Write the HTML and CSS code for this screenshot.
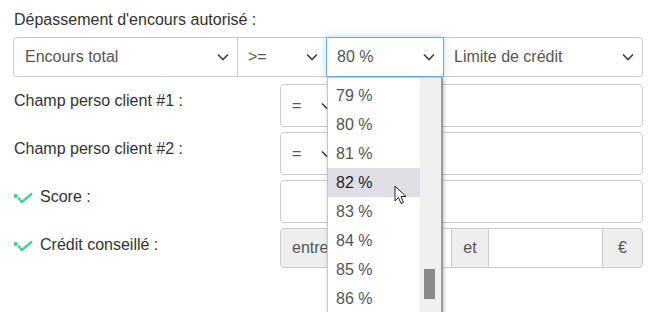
FILE: index.html
```html
<html>
    <head>
        <title>Dépassement d'encours</title>
        <link rel="stylesheet" href="styles.css">
    </head>
    <body>
        <div class="page">
            <div class="title">Dépassement d'encours autorisé :</div>

            <div class="select-group">
                <div class="select sel-field">Encours total
                    <svg class="chevron" viewBox="0 0 12 8"><polyline points="1,1.5 6,6.5 11,1.5"/></svg>
                </div>
                <div class="select sel-cmp">&gt;=
                    <svg class="chevron" viewBox="0 0 12 8"><polyline points="1,1.5 6,6.5 11,1.5"/></svg>
                </div>
                <div class="select sel-pct focused">80 %
                    <svg class="chevron" viewBox="0 0 12 8"><polyline points="1,1.5 6,6.5 11,1.5"/></svg>

                    <div class="dropdown">
                        <div class="dropdown-list">
                            <div class="option">79 %</div>
                            <div class="option">80 %</div>
                            <div class="option">81 %</div>
                            <div class="option hover">82 %</div>
                            <div class="option">83 %</div>
                            <div class="option">84 %</div>
                            <div class="option">85 %</div>
                            <div class="option">86 %</div>
                        </div>
                        <div class="scroll-track"><div class="scroll-thumb"></div></div>
                        <svg class="cursor" viewBox="0 0 13 21"><path d="M1 1 L1 16 L4.5 12.5 L7 18.5 L9.5 17.5 L7 11.5 L12 11.5 Z"/></svg>
                    </div>
                </div>
                <div class="select sel-ref">Limite de crédit
                    <svg class="chevron" viewBox="0 0 12 8"><polyline points="1,1.5 6,6.5 11,1.5"/></svg>
                </div>
            </div>

            <div class="row">
                <div class="label">Champ perso client #1 :</div>
                <div class="control group">
                    <div class="select sel-op">=
                        <svg class="chevron" viewBox="0 0 12 8"><polyline points="1,1.5 6,6.5 11,1.5"/></svg>
                    </div>
                    <input class="input grow" type="text">
                </div>
            </div>

            <div class="row">
                <div class="label">Champ perso client #2 :</div>
                <div class="control group">
                    <div class="select sel-op">=
                        <svg class="chevron" viewBox="0 0 12 8"><polyline points="1,1.5 6,6.5 11,1.5"/></svg>
                    </div>
                    <input class="input grow" type="text">
                </div>
            </div>

            <div class="row">
                <div class="label">
                    <svg class="check" viewBox="0 0 20 12"><circle cx="1.5" cy="4" r="1"/><polyline points="4,5.5 8,10 18,1.5"/></svg>
                    Score :
                </div>
                <div class="control group">
                    <input class="input grow" type="text">
                </div>
            </div>

            <div class="row row-last">
                <div class="label">
                    <svg class="check" viewBox="0 0 20 12"><circle cx="1.5" cy="4" r="1"/><polyline points="4,5.5 8,10 18,1.5"/></svg>
                    Crédit conseillé :
                </div>
                <div class="control group">
                    <div class="addon">entre</div>
                    <input class="input grow" type="text">
                    <div class="addon addon-et">et</div>
                    <input class="input amount" type="text">
                    <div class="addon addon-euro">€</div>
                </div>
            </div>
        </div>
    </body>
</html>
```

FILE: styles.css
```css
body{
    margin: 0;
    background-color: #fff;
    font-family: "Liberation Sans", Arial, sans-serif;
    font-size: 16px;
    color: #333;
}
.page{
    padding: 10px 7px 0 13px;
}
.title{
    padding-left: 1px;
    line-height: 20px;
    margin-bottom: 7px;
}

/* selects */
.select-group{
    display: flex;
    height: 40px;
}
.select{
    position: relative;
    display: flex;
    align-items: center;
    justify-content: space-between;
    box-sizing: border-box;
    height: 100%;
    padding: 0 8px 0 11px;
    border: 1px solid #ccc;
    background-color: #fff;
    color: #555;
    flex-shrink: 0;
}
.select + .select{
    margin-left: -1px;
}
.chevron{
    width: 12px;
    height: 8px;
    fill: none;
    stroke: #444;
    stroke-width: 1.7;
}
.sel-field{
    width: 225px;
    border-radius: 4px 0 0 4px;
}
.sel-cmp{
    width: 90px;
    padding-left: 10px;
}
.sel-pct{
    width: 118px;
    padding-left: 10px;
}
.sel-pct.focused{
    border-color: #66afe9;
    box-shadow: 0 0 6px rgba(102, 175, 233, 0.5);
    z-index: 2;
}
.sel-ref{
    flex: 1;
    flex-shrink: 1;
    padding-left: 10px;
    border-radius: 0 4px 4px 0;
}

/* dropdown list */
.dropdown{
    position: absolute;
    top: calc(100% + 1px);
    left: 0;
    width: 116px;
    height: 240px;
    box-sizing: border-box;
    display: flex;
    background-color: #fff;
    border: 1px solid #c8c8c8;
    border-right: 2px solid #9a9a9a;
    box-shadow: 1px 2px 4px rgba(0, 0, 0, 0.25);
    overflow: hidden;
    z-index: 5;
}
.dropdown-list{
    flex: 1;
    padding-top: 3px;
}
.option{
    height: 29px;
    line-height: 29px;
    padding-left: 8px;
    color: #555;
}
.option.hover{
    background-color: #dedee4;
    color: #222;
}
.scroll-track{
    position: relative;
    width: 21px;
    background-color: #f0f0f0;
}
.scroll-thumb{
    position: absolute;
    left: 4px;
    top: 191px;
    width: 11px;
    height: 30px;
    background-color: #8a8a8a;
}
.cursor{
    position: absolute;
    left: 66px;
    top: 107px;
    width: 13px;
    height: 21px;
    fill: #fff;
    stroke: #222;
    stroke-width: 1;
}

/* rows */
.row{
    display: flex;
    margin-top: 7px;
    height: 43px;
}
.row + .row{
    margin-top: 5px;
}
.row-last{
    height: 40px;
}
.label{
    flex-shrink: 0;
    width: 266px;
    padding: 8px 0 0 1px;
    line-height: 18px;
    display: flex;
    align-items: flex-start;
}
.check{
    width: 20px;
    height: 12px;
    margin: 4px 6px 0 0;
    fill: #3dd68c;
    stroke: #3dd68c;
    stroke-width: 2.4;
}
.check polyline{
    fill: none;
}
.control{
    flex: 1;
    min-width: 0;
    display: flex;
}
.sel-op{
    width: 62px;
}
.input{
    box-sizing: border-box;
    height: 100%;
    border: 1px solid #ccc;
    background-color: #fff;
    font-family: inherit;
    font-size: 16px;
    padding: 0 10px;
    outline: none;
    margin: 0;
}
.grow{
    flex: 1;
    min-width: 0;
}
.select + .input,
.addon + .input,
.input + .addon{
    margin-left: -1px;
}
.group > :first-child{
    border-top-left-radius: 4px;
    border-bottom-left-radius: 4px;
}
.group > :last-child{
    border-top-right-radius: 4px;
    border-bottom-right-radius: 4px;
}
.addon{
    flex-shrink: 0;
    box-sizing: border-box;
    height: 100%;
    display: flex;
    align-items: center;
    padding: 0 11px;
    background-color: #eee;
    border: 1px solid #ccc;
    color: #555;
}
.addon-et{
    width: 38px;
    justify-content: center;
    padding: 0;
}
.amount{
    flex-shrink: 0;
    width: 115px;
}
.addon-euro{
    width: 41px;
    justify-content: center;
    padding: 0;
}
```
